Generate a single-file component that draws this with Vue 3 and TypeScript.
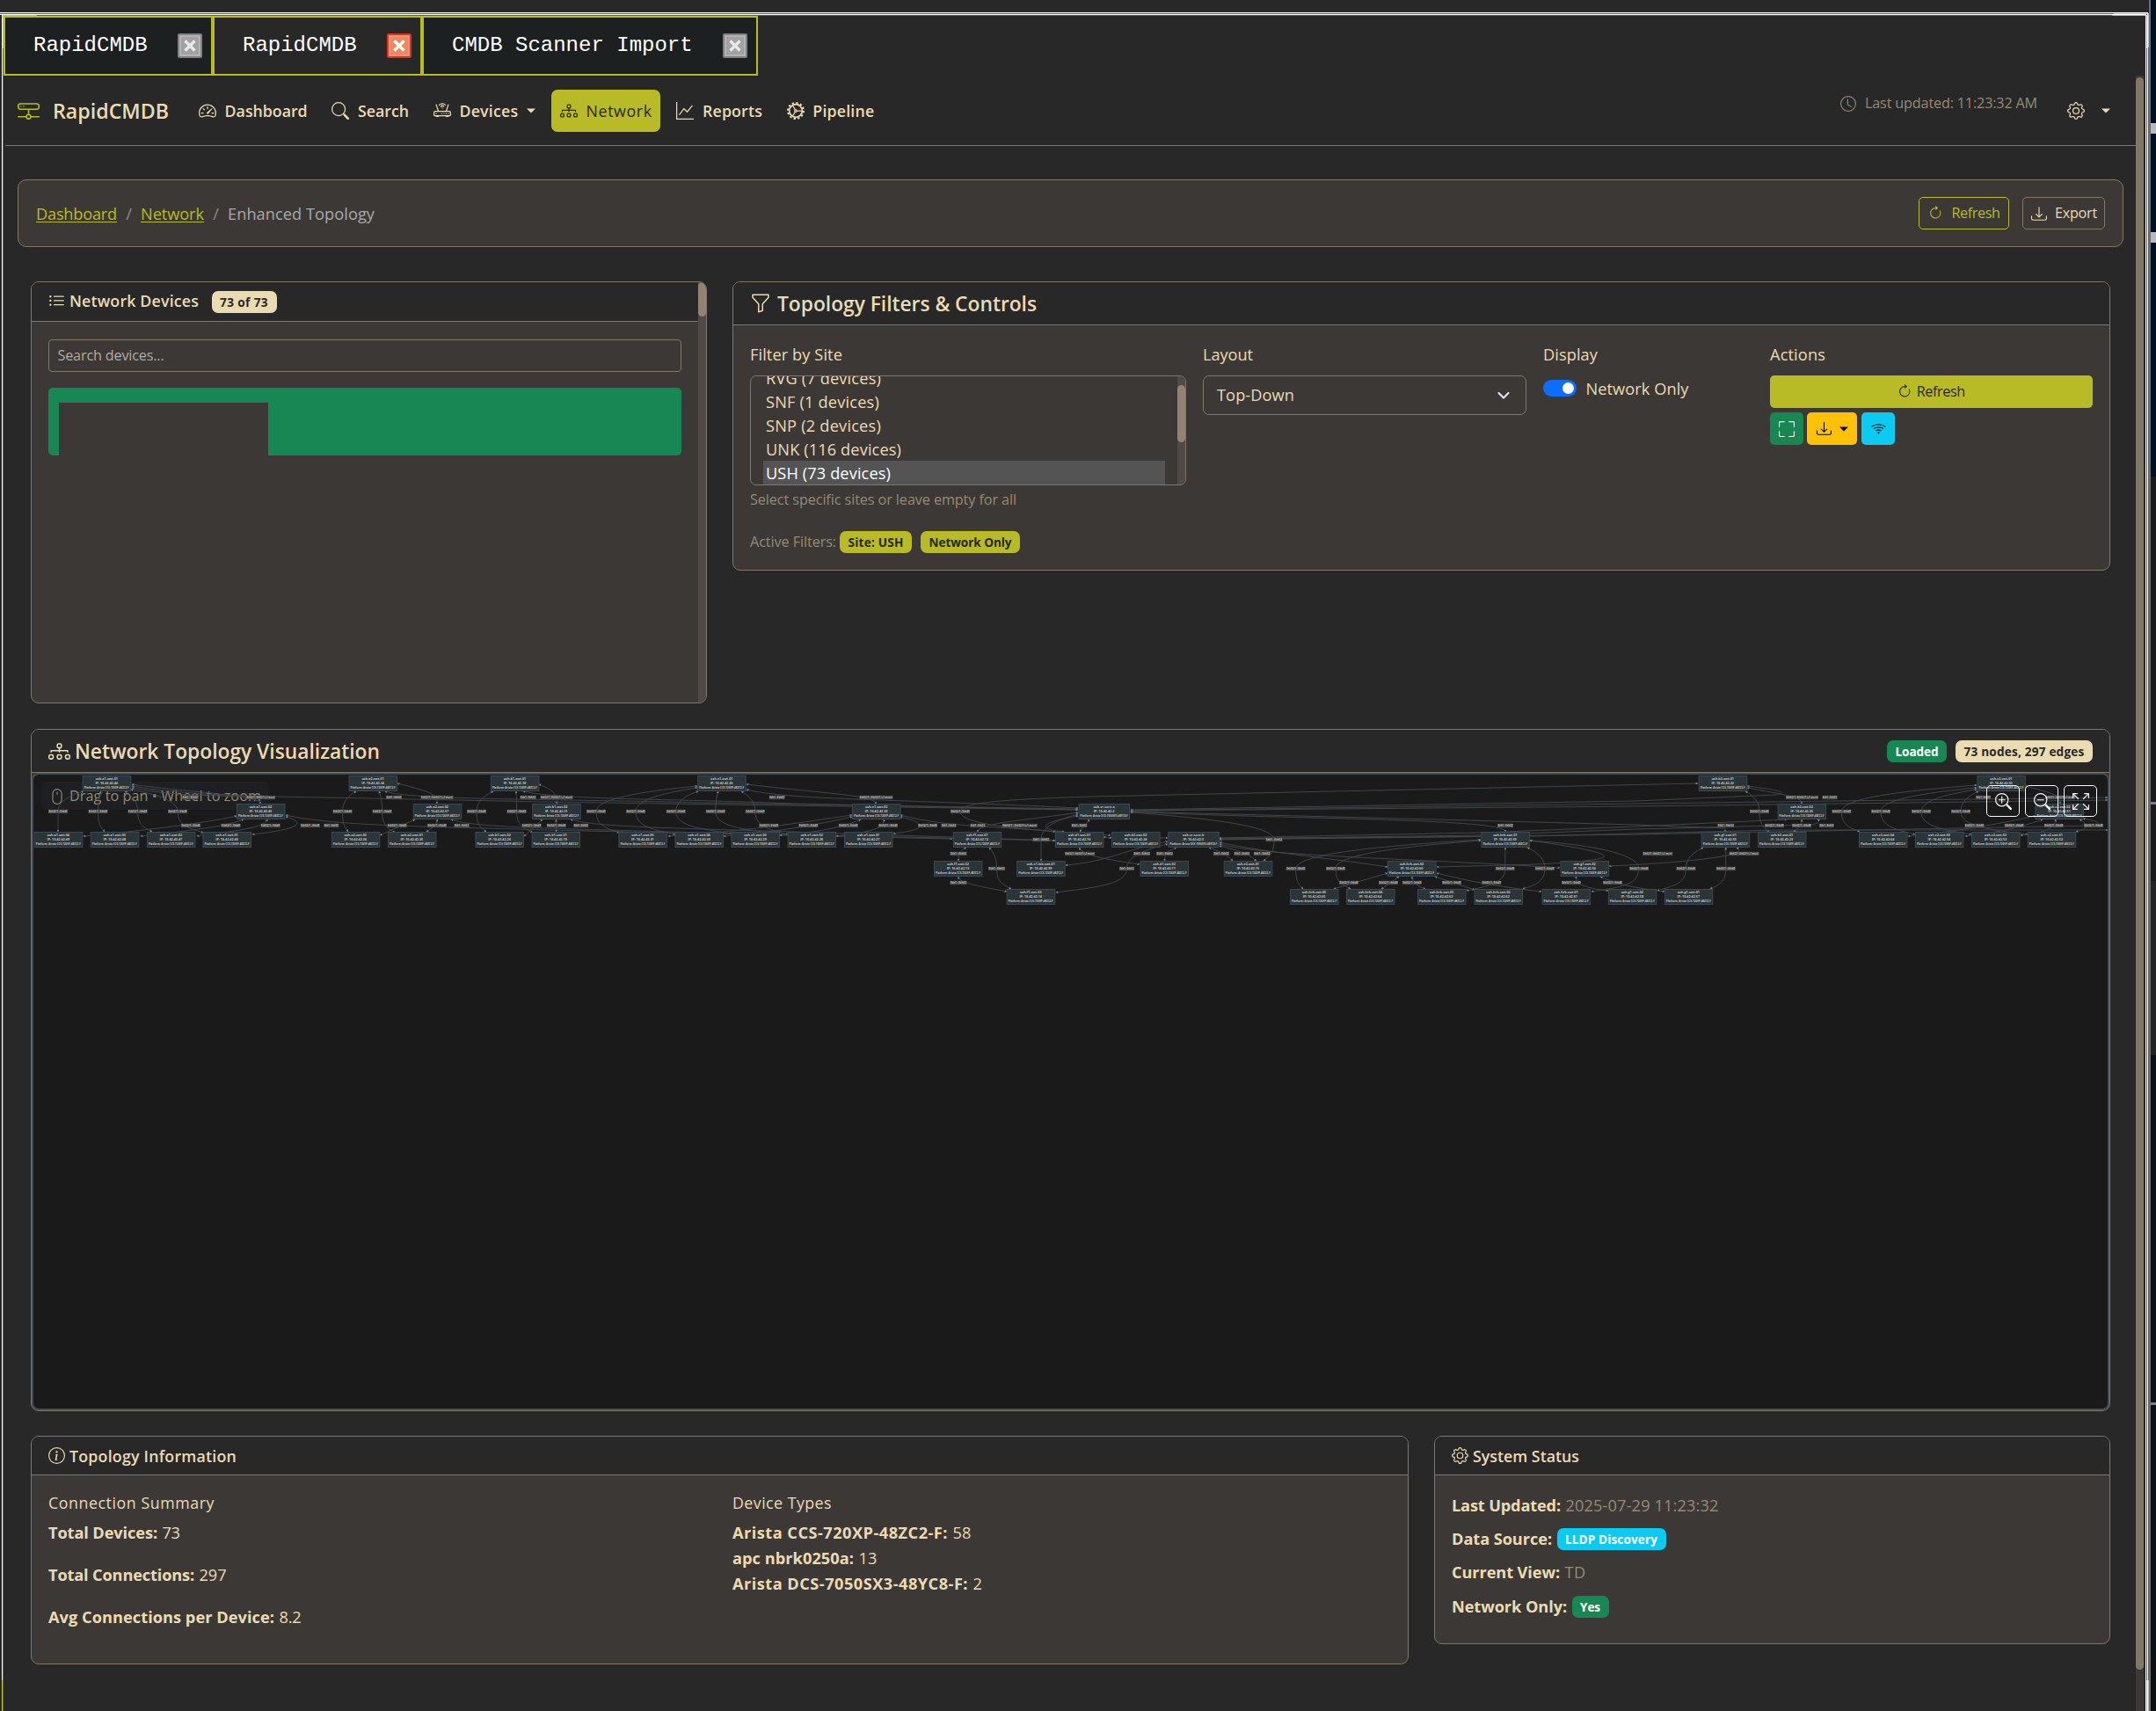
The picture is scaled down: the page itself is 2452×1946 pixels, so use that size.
<script setup lang="ts">
import { h, type Directive, type FunctionalComponent } from 'vue'

const RING = 'M8 15A7 7 0 1 1 8 1a7 7 0 0 1 0 14m0 1A8 8 0 1 0 8 0a8 8 0 0 0 0 16'
const LENS =
  'M6.5 12a5.5 5.5 0 1 0 0-11 5.5 5.5 0 0 0 0 11M13 6.5a6.5 6.5 0 1 1-13 0 6.5 6.5 0 0 1 13 0'
const HANDLE =
  'M10.344 11.742q.044.06.098.115l3.85 3.85a1 1 0 0 0 1.415-1.414l-3.85-3.85a1 1 0 0 0-.115-.1 6.5 6.5 0 0 1-1.398 1.4z'

const paths: Record<string, string[]> = {
  hdd: [
    'M4.5 5a.5.5 0 1 0 0-1 .5.5 0 0 0 0 1M3 4.5a.5.5 0 1 1-1 0 .5.5 0 0 1 1 0',
    'M0 4a2 2 0 0 1 2-2h12a2 2 0 0 1 2 2v1a2 2 0 0 1-2 2H8.5v3a1.5 1.5 0 0 1 1.5 1.5h5.5a.5.5 0 0 1 0 1H10A1.5 1.5 0 0 1 8.5 14h-1A1.5 1.5 0 0 1 6 12.5H.5a.5.5 0 0 1 0-1H6A1.5 1.5 0 0 1 7.5 10V7H2a2 2 0 0 1-2-2zm1 0v1a1 1 0 0 0 1 1h12a1 1 0 0 0 1-1V4a1 1 0 0 0-1-1H2a1 1 0 0 0-1 1m6 7.5v1a.5.5 0 0 0 .5.5h1a.5.5 0 0 0 .5-.5v-1a.5.5 0 0 0-.5-.5h-1a.5.5 0 0 0-.5.5',
  ],
  speed: [
    'M8 4a.5.5 0 0 1 .5.5V6a.5.5 0 0 1-1 0V4.5A.5.5 0 0 1 8 4M3.732 5.732a.5.5 0 0 1 .707 0l.915.914a.5.5 0 1 1-.708.708l-.914-.915a.5.5 0 0 1 0-.707M2 10a.5.5 0 0 1 .5-.5h1.586a.5.5 0 0 1 0 1H2.5A.5.5 0 0 1 2 10m9.5 0a.5.5 0 0 1 .5-.5h1.5a.5.5 0 0 1 0 1H12a.5.5 0 0 1-.5-.5m.754-4.246a.39.39 0 0 0-.527-.02L7.547 9.31a.91.91 0 1 0 1.302 1.258l3.434-4.297a.39.39 0 0 0-.029-.518z',
    'M0 10a8 8 0 1 1 15.547 2.661c-.442 1.253-1.845 1.602-2.932 1.25C11.309 13.488 9.475 13 8 13c-1.474 0-3.31.488-4.615.911-1.087.352-2.49.003-2.932-1.25A8 8 0 0 1 0 10m8-7a7 7 0 0 0-6.603 9.329c.203.575.923.876 1.68.63C4.397 12.533 6.358 12 8 12s3.604.532 4.923.96c.757.245 1.477-.056 1.68-.631A7 7 0 0 0 8 3',
  ],
  search: [LENS, HANDLE],
  router: [
    'M5.525 3.025a3.5 3.5 0 0 1 4.95 0 .5.5 0 1 0 .707-.707 4.5 4.5 0 0 0-6.364 0 .5.5 0 0 0 .707.707',
    'M6.94 4.44a1.5 1.5 0 0 1 2.12 0 .5.5 0 0 0 .708-.708 2.5 2.5 0 0 0-3.536 0 .5.5 0 0 0 .707.707ZM2.5 11a.5.5 0 1 1 0-1 .5.5 0 0 1 0 1m4.5-.5a.5.5 0 1 0 1 0 .5.5 0 0 0-1 0m2.5.5a.5.5 0 1 1 0-1 .5.5 0 0 1 0 1m1.5-.5a.5.5 0 1 0 1 0 .5.5 0 0 0-1 0m2 0a.5.5 0 1 0 1 0 .5.5 0 0 0-1 0',
    'M2.974 2.342a.5.5 0 1 0-.948.316L3.806 8H1.5A1.5 1.5 0 0 0 0 9.5v2A1.5 1.5 0 0 0 1.5 13H2a.5.5 0 0 0 .5.5h2A.5.5 0 0 0 5 13h6a.5.5 0 0 0 .5.5h2a.5.5 0 0 0 .5-.5h.5a1.5 1.5 0 0 0 1.5-1.5v-2A1.5 1.5 0 0 0 14.5 8h-2.306l1.78-5.342a.5.5 0 1 0-.948-.316L11.14 8H4.86zM14.5 9a.5.5 0 0 1 .5.5v2a.5.5 0 0 1-.5.5h-13a.5.5 0 0 1-.5-.5v-2a.5.5 0 0 1 .5-.5z',
    'M8.5 5.5a.5.5 0 1 1-1 0 .5.5 0 0 1 1 0',
  ],
  diagram: [
    'M6 3.5A1.5 1.5 0 0 1 7.5 2h1A1.5 1.5 0 0 1 10 3.5v1A1.5 1.5 0 0 1 8.5 6v1H14a.5.5 0 0 1 .5.5v1a.5.5 0 0 1-1 0V8h-5v.5a.5.5 0 0 1-1 0V8h-5v.5a.5.5 0 0 1-1 0v-1A.5.5 0 0 1 2 7h5.5V6A1.5 1.5 0 0 1 6 4.5zM8.5 5a.5.5 0 0 0 .5-.5v-1a.5.5 0 0 0-.5-.5h-1a.5.5 0 0 0-.5.5v1a.5.5 0 0 0 .5.5zM0 11.5A1.5 1.5 0 0 1 1.5 10h1A1.5 1.5 0 0 1 4 11.5v1A1.5 1.5 0 0 1 2.5 14h-1A1.5 1.5 0 0 1 0 12.5zm1.5-.5a.5.5 0 0 0-.5.5v1a.5.5 0 0 0 .5.5h1a.5.5 0 0 0 .5-.5v-1a.5.5 0 0 0-.5-.5zm4.5.5A1.5 1.5 0 0 1 7.5 10h1a1.5 1.5 0 0 1 1.5 1.5v1A1.5 1.5 0 0 1 8.5 14h-1A1.5 1.5 0 0 1 6 12.5zm1.5-.5a.5.5 0 0 0-.5.5v1a.5.5 0 0 0 .5.5h1a.5.5 0 0 0 .5-.5v-1a.5.5 0 0 0-.5-.5zm4.5.5a1.5 1.5 0 0 1 1.5-1.5h1a1.5 1.5 0 0 1 1.5 1.5v1a1.5 1.5 0 0 1-1.5 1.5h-1a1.5 1.5 0 0 1-1.5-1.5zm1.5-.5a.5.5 0 0 0-.5.5v1a.5.5 0 0 0 .5.5h1a.5.5 0 0 0 .5-.5v-1a.5.5 0 0 0-.5-.5z',
  ],
  graph: [
    'M0 0h1v15h15v1H0zm14.817 3.113a.5.5 0 0 1 .07.704l-4.5 5.5a.5.5 0 0 1-.74.037L7.06 6.767l-3.656 5.027a.5.5 0 0 1-.808-.588l4-5.5a.5.5 0 0 1 .758-.06l2.609 2.61 4.15-5.073a.5.5 0 0 1 .704-.07',
  ],
  clock: [
    'M8 3.5a.5.5 0 0 0-1 0V9a.5.5 0 0 0 .252.434l3.5 2a.5.5 0 0 0 .496-.868L8 8.71z',
    RING,
  ],
  gear: [
    'M8 4.754a3.246 3.246 0 1 0 0 6.492 3.246 3.246 0 0 0 0-6.492M5.754 8a2.246 2.246 0 1 1 4.492 0 2.246 2.246 0 0 1-4.492 0',
    'M9.796 1.343c-.527-1.79-3.065-1.79-3.592 0l-.094.319a.873.873 0 0 1-1.255.52l-.292-.16c-1.64-.892-3.433.902-2.54 2.541l.159.292a.873.873 0 0 1-.52 1.255l-.319.094c-1.79.527-1.79 3.065 0 3.592l.319.094a.873.873 0 0 1 .52 1.255l-.16.292c-.892 1.64.901 3.434 2.541 2.54l.292-.159a.873.873 0 0 1 1.255.52l.094.319c.527 1.79 3.065 1.79 3.592 0l.094-.319a.873.873 0 0 1 1.255-.52l.292.16c1.64.893 3.434-.902 2.54-2.541l-.159-.292a.873.873 0 0 1 .52-1.255l.319-.094c1.79-.527 1.79-3.065 0-3.592l-.319-.094a.873.873 0 0 1-.52-1.255l.16-.292c.893-1.64-.902-3.433-2.541-2.54l-.292.159a.873.873 0 0 1-1.255-.52zm-2.633.283c.246-.835 1.428-.835 1.674 0l.094.319a1.873 1.873 0 0 0 2.693 1.115l.291-.16c.764-.415 1.6.42 1.184 1.185l-.159.292a1.873 1.873 0 0 0 1.116 2.692l.318.094c.835.246.835 1.428 0 1.674l-.319.094a1.873 1.873 0 0 0-1.115 2.693l.16.291c.415.764-.42 1.6-1.185 1.184l-.291-.159a1.873 1.873 0 0 0-2.693 1.116l-.094.318c-.246.835-1.428.835-1.674 0l-.094-.319a1.873 1.873 0 0 0-2.692-1.115l-.292.16c-.764.415-1.6-.42-1.184-1.185l.159-.291A1.873 1.873 0 0 0 1.945 8.93l-.319-.094c-.835-.246-.835-1.428 0-1.674l.319-.094A1.873 1.873 0 0 0 3.06 4.377l-.16-.292c-.415-.764.42-1.6 1.185-1.184l.292.159a1.873 1.873 0 0 0 2.692-1.115z',
  ],
  refresh: [
    'M8 3a5 5 0 1 0 4.546 2.914.5.5 0 0 1 .908-.417A6 6 0 1 1 8 2z',
    'M8 4.466V.534a.25.25 0 0 1 .41-.192l2.36 1.966c.12.1.12.284 0 .384L8.41 4.658A.25.25 0 0 1 8 4.466',
  ],
  download: [
    'M.5 9.9a.5.5 0 0 1 .5.5v2.5a1 1 0 0 0 1 1h12a1 1 0 0 0 1-1v-2.5a.5.5 0 0 1 1 0v2.5a2 2 0 0 1-2 2H2a2 2 0 0 1-2-2v-2.5a.5.5 0 0 1 .5-.5',
    'M7.646 11.854a.5.5 0 0 0 .708 0l3-3a.5.5 0 0 0-.708-.708L8.5 10.293V1.5a.5.5 0 0 0-1 0v8.793L5.354 8.146a.5.5 0 1 0-.708.708z',
  ],
  list: [
    'M5 11.5a.5.5 0 0 1 .5-.5h9a.5.5 0 0 1 0 1h-9a.5.5 0 0 1-.5-.5m0-4a.5.5 0 0 1 .5-.5h9a.5.5 0 0 1 0 1h-9a.5.5 0 0 1-.5-.5m0-4a.5.5 0 0 1 .5-.5h9a.5.5 0 0 1 0 1h-9a.5.5 0 0 1-.5-.5m-3 1a1 1 0 1 0 0-2 1 1 0 0 0 0 2m0 4a1 1 0 1 0 0-2 1 1 0 0 0 0 2m0 4a1 1 0 1 0 0-2 1 1 0 0 0 0 2',
  ],
  funnel: [
    'M1.5 1.5A.5.5 0 0 1 2 1h12a.5.5 0 0 1 .5.5v2a.5.5 0 0 1-.128.334L10 8.692V13.5a.5.5 0 0 1-.342.474l-3 1A.5.5 0 0 1 6 14.5V8.692L1.628 3.834A.5.5 0 0 1 1.5 3.5zm1 .5v1.308l4.372 4.858A.5.5 0 0 1 7 8.5v5.306l2-.666V8.5a.5.5 0 0 1 .128-.334L13.5 3.308V2z',
  ],
  fullscreen: [
    'M1.5 1a.5.5 0 0 0-.5.5v4a.5.5 0 0 1-1 0v-4A1.5 1.5 0 0 1 1.5 0h4a.5.5 0 0 1 0 1zM10 .5a.5.5 0 0 1 .5-.5h4A1.5 1.5 0 0 1 16 1.5v4a.5.5 0 0 1-1 0v-4a.5.5 0 0 0-.5-.5h-4a.5.5 0 0 1-.5-.5M.5 10a.5.5 0 0 1 .5.5v4a.5.5 0 0 0 .5.5h4a.5.5 0 0 1 0 1h-4A1.5 1.5 0 0 1 0 14.5v-4a.5.5 0 0 1 .5-.5m15 0a.5.5 0 0 1 .5.5v4a1.5 1.5 0 0 1-1.5 1.5h-4a.5.5 0 0 1 0-1h4a.5.5 0 0 0 .5-.5v-4a.5.5 0 0 1 .5-.5',
  ],
  wifi: [
    'M15.384 6.115a.485.485 0 0 0-.047-.736A12.44 12.44 0 0 0 8 3C5.259 3 2.723 3.882.663 5.379a.485.485 0 0 0-.048.736.52.52 0 0 0 .668.05A11.45 11.45 0 0 1 8 4c2.507 0 4.827.802 6.716 2.164.205.148.49.13.668-.049',
    'M13.229 8.271a.482.482 0 0 0-.063-.745A9.46 9.46 0 0 0 8 6c-1.905 0-3.68.56-5.166 1.526a.48.48 0 0 0-.063.745.525.525 0 0 0 .652.065A8.46 8.46 0 0 1 8 7a8.46 8.46 0 0 1 4.576 1.336c.206.132.48.108.653-.065m-2.183 2.183c.226-.226.185-.605-.1-.75A6.5 6.5 0 0 0 8 9c-1.06 0-2.062.254-2.946.704-.285.145-.326.524-.1.75l.015.015c.16.16.407.19.611.09A5.5 5.5 0 0 1 8 10c.868 0 1.69.201 2.42.56.203.1.45.07.61-.091zM9.06 12.44c.196-.196.198-.52-.04-.66A2 2 0 0 0 8 11.5a2 2 0 0 0-1.02.28c-.238.14-.236.464-.04.66l.706.706a.5.5 0 0 0 .707 0l.707-.707z',
  ],
  mouse: [
    'M8 3a.5.5 0 0 1 .5.5v2a.5.5 0 0 1-1 0v-2A.5.5 0 0 1 8 3m4 8a4 4 0 0 1-8 0V5a4 4 0 1 1 8 0zM8 0a5 5 0 0 0-5 5v6a5 5 0 0 0 10 0V5a5 5 0 0 0-5-5',
  ],
  zoomIn: [
    LENS,
    HANDLE,
    'M6.5 3a.5.5 0 0 1 .5.5V6h2.5a.5.5 0 0 1 0 1H7v2.5a.5.5 0 0 1-1 0V7H3.5a.5.5 0 0 1 0-1H6V3.5a.5.5 0 0 1 .5-.5',
  ],
  zoomOut: [LENS, HANDLE, 'M3 6.5a.5.5 0 0 1 .5-.5h6a.5.5 0 0 1 0 1h-6a.5.5 0 0 1-.5-.5'],
  arrows: [
    'M5.828 10.172a.5.5 0 0 0-.707 0l-4.096 4.096V11.5a.5.5 0 0 0-1 0v3.975a.5.5 0 0 0 .5.5H4.5a.5.5 0 0 0 0-1H1.732l4.096-4.096a.5.5 0 0 0 0-.707m4.344 0a.5.5 0 0 1 .707 0l4.096 4.096V11.5a.5.5 0 1 1 1 0v3.975a.5.5 0 0 1-.5.5H11.5a.5.5 0 0 1 0-1h2.768l-4.096-4.096a.5.5 0 0 1 0-.707m0-4.344a.5.5 0 0 0 .707 0l4.096-4.096V4.5a.5.5 0 1 0 1 0V.525a.5.5 0 0 0-.5-.5H11.5a.5.5 0 0 0 0 1h2.768l-4.096 4.096a.5.5 0 0 0 0 .707m-4.344 0a.5.5 0 0 1-.707 0L1.025 1.732V4.5a.5.5 0 0 1-1 0V.525a.5.5 0 0 1 .5-.5H4.5a.5.5 0 0 1 0 1H1.732l4.096 4.096a.5.5 0 0 1 0 .707',
  ],
  info: [
    RING,
    'm8.93 6.588-2.29.287-.082.38.45.083c.294.07.352.176.288.469l-.738 3.468c-.194.897.105 1.319.808 1.319.545 0 1.178-.252 1.465-.598l.088-.416c-.2.176-.492.246-.686.246-.275 0-.375-.193-.304-.533zM9 4.5a1 1 0 1 1-2 0 1 1 0 0 1 2 0',
  ],
  caret: ['M0 4h16l-8 8z'],
}

const Ico: FunctionalComponent<{ name: string; size?: number }> = (p) => {
  const size = p.size ?? 19
  // Toothed wheel with spokes is simpler as strokes than as an outline.
  const body =
    p.name === 'wheel'
      ? [
          h('circle', { cx: 8, cy: 8, r: 5.9, fill: 'none', stroke: 'currentColor', 'stroke-width': 1.4 }),
          h('circle', {
            cx: 8, cy: 8, r: 7.2, fill: 'none', stroke: 'currentColor',
            'stroke-width': 1.6, 'stroke-dasharray': '1.9 1.87',
          }),
          h('path', {
            d: 'M9 8h5M7.5 7.1 5 2.8M7.5 8.9 5 13.2M9 8a1 1 0 1 1-2 0 1 1 0 0 1 2 0',
            fill: 'none', stroke: 'currentColor', 'stroke-width': 1,
          }),
        ]
      : (paths[p.name] ?? []).map((d) => h('path', { d, 'fill-rule': 'evenodd' }))
  return h('svg', { width: size, height: size, viewBox: '0 0 16 16', fill: 'currentColor' }, body)
}
Ico.props = ['name', 'size']

// Tracks the text so that it fills the given width in pixels.
const vFit: Directive<HTMLElement, number> = {
  mounted(el, { value }) {
    const count = (el.textContent ?? '').length
    const natural = el.getBoundingClientRect().width
    if (count > 0) el.style.letterSpacing = `${((value - natural) / count).toFixed(3)}px`
  },
}

const tabs = [
  { title: 'RapidCMDB', active: false },
  { title: 'RapidCMDB', active: true },
  { title: 'CMDB Scanner Import', active: false },
]

const nav = [
  { label: 'Dashboard', icon: 'speed', w: 94 },
  { label: 'Search', icon: 'search', w: 58 },
  { label: 'Devices', icon: 'router', w: 67, caret: true },
  { label: 'Network', icon: 'diagram', w: 75, active: true },
  { label: 'Reports', icon: 'graph', w: 68 },
  { label: 'Pipeline', icon: 'wheel', w: 70 },
]

const sites = [
  { label: 'RVG (7 devices)', w: 131 },
  { label: 'SNF (1 devices)', w: 129 },
  { label: 'SNP (2 devices)', w: 131 },
  { label: 'UNK (116 devices)', w: 154 },
  { label: 'USH (73 devices)', w: 142, selected: true },
]

const summary = [
  { label: 'Total Devices:', lw: 124, value: '73', vw: 20 },
  { label: 'Total Connections:', lw: 166, value: '297', vw: 31 },
  { label: 'Avg Connections per Device:', lw: 257, value: '8.2', vw: 25 },
]
const types = [
  { label: 'Arista CCS-720XP-48ZC2-F:', lw: 245, value: '58', vw: 21 },
  { label: 'apc nbrk0250a:', lw: 138, value: '13', vw: 21 },
  { label: 'Arista DCS-7050SX3-48YC8-F:', lw: 268, value: '2', vw: 10 },
]

// Topology nodes: [left, layer, host, address, wide]
const layerY = [882, 914, 946, 979, 1011]
type GraphNode = [number, number, string, string, boolean?]
const nodes: GraphNode[] = [
  [93.7, 0, 'ush-a1-swt-01', '10.42.42.44'],
  [396.6, 0, 'ush-a2-swt-01', '10.42.42.34'],
  [557.9, 0, 'ush-b1-swt-01', '10.42.42.18'],
  [793.2, 0, 'ush-e1-swt-01', '10.42.42.26'],
  [1931.7, 0, 'ush-b2-swt-01', '10.42.42.22'],
  [2248.4, 0, 'ush-c2-swt-01', '10.42.42.50'],
  [268.9, 1, 'ush-a1-swt-02', '10.42.42.45'],
  [469.8, 1, 'ush-a2-swt-02', '10.42.42.37'],
  [605.2, 1, 'ush-b1-swt-02', '10.42.42.21'],
  [969.1, 1, 'ush-e1-swt-02', '10.42.42.33'],
  [1226.6, 1, 'ush-cr-core-a', '10.42.42.2', true],
  [2021.6, 1, 'ush-b2-swt-02', '10.42.42.25'],
  [2314.5, 1, 'ush-c2-swt-02', '10.42.42.51'],
  [38.8, 2, 'ush-a1-swt-04', '10.42.42.49'],
  [102.8, 2, 'ush-a1-swt-03', '10.42.42.48'],
  [166.9, 2, 'ush-a1-swt-02', '10.42.42.47'],
  [230.5, 2, 'ush-a1-swt-01', '10.42.42.46'],
  [376.8, 2, 'ush-a2-swt-02', '10.42.42.36'],
  [440.9, 2, 'ush-a2-swt-01', '10.42.42.35'],
  [540.5, 2, 'ush-b1-swt-02', '10.42.42.20'],
  [604.6, 2, 'ush-b1-swt-01', '10.42.42.19'],
  [703.4, 2, 'ush-e1-swt-05', '10.42.42.31'],
  [767.5, 2, 'ush-e1-swt-04', '10.42.42.30'],
  [831.5, 2, 'ush-e1-swt-03', '10.42.42.29'],
  [895.6, 2, 'ush-e1-swt-02', '10.42.42.28'],
  [960, 2, 'ush-e1-swt-01', '10.42.42.27'],
  [1083.8, 2, 'ush-f1-swt-01', '10.42.42.12'],
  [1200, 2, 'ush-d1-swt-01', '10.42.42.10'],
  [1264.1, 2, 'ush-b2-swt-02', '10.42.42.24'],
  [1328.2, 2, 'ush-cr-core-b', '10.42.42.3', true],
  [1684.4, 2, 'ush-hrb-swt-01', '10.42.42.59'],
  [1934.7, 2, 'ush-g1-swt-01', '10.42.42.55'],
  [1998.9, 2, 'ush-b2-swt-01', '10.42.42.23'],
  [2114, 2, 'ush-c2-swt-04', '10.42.42.64'],
  [2177.9, 2, 'ush-c2-swt-03', '10.42.42.54'],
  [2242, 2, 'ush-c2-swt-02', '10.42.42.53'],
  [2305.8, 2, 'ush-c2-swt-01', '10.42.42.52'],
  [1062, 3, 'ush-f1-swt-02', '10.42.42.13'],
  [1156.2, 3, 'ush-e1-lab-swt-01', '10.42.42.99'],
  [1296.5, 3, 'ush-d1-swt-02', '10.42.42.11'],
  [1391.8, 3, 'ush-e2-swt-01', '10.42.42.15'],
  [1578, 3, 'ush-hrb-swt-02', '10.42.42.60'],
  [1774.6, 3, 'ush-g1-swt-02', '10.42.42.56'],
  [1144.7, 4, 'ush-f1-swt-03', '10.42.42.14'],
  [1467, 4, 'ush-hrb-swt-05', '10.42.42.65'],
  [1531, 4, 'ush-hrb-swt-04', '10.42.42.64'],
  [1612, 4, 'ush-hrb-swt-03', '10.42.42.63'],
  [1676.5, 4, 'ush-hrb-swt-02', '10.42.42.62'],
  [1753.6, 4, 'ush-hrb-swt-01', '10.42.42.61'],
  [1828.8, 4, 'ush-g1-swt-02', '10.42.42.58'],
  [1892.8, 4, 'ush-g1-swt-01', '10.42.42.57'],
]

// Port labels by line: [y, [centre, width?]...]
const labelRows: [number, number[][]][] = [
  [907, [[216.3, 18], [296.5, 33], [448, 18], [497, 37], [600.6, 18], [633, 37], [883.7, 18], [996.4, 38], [2049.5, 37], [2081, 17], [2255.6, 17], [2343, 34]]],
  [923, [[66], [111.5], [156.6], [202], [389.5], [434.6], [542], [587.6], [678], [723], [768.7], [813.8], [858.8], [1092], [2001], [2094.4], [2139], [2185], [2230]]],
  [939, [[217], [262.6], [307.6], [352.7], [376.8, 17], [451.6], [497], [525, 17], [604.6], [632.7], [660.7, 17], [874.3], [919.3], [964.8], [1009.9], [1055], [1079, 17], [1112, 17], [1159.7, 40], [1227.4, 18], [1712, 18], [1962.7, 19], [2018], [2049], [2077.4, 17], [2245.4], [2290.7], [2335.7], [2381]]],
  [955, [[1184, 19], [1449, 19]]],
  [971, [[1090, 19], [1228, 34], [1298.5, 19], [1324.6, 19], [1389, 18], [1412.4, 18], [1435.3, 19], [1885.3, 34], [1983.4, 34]]],
  [988, [[1133.6, 19], [1281.5, 17], [1473.7], [1519], [1711.7], [1756.8], [1864], [1917.4], [1962.7]]],
  [1004, [[1090, 19], [1534], [1579], [1605.8], [1651], [1696.3], [1787], [1834]]],
]
const portText = (w: number) =>
  w > 30 ? 'Eth52/1 : Eth52/1 (+1 more)' : w < 20 ? 'Eth1 : Eth52' : 'Eth52/1 : Eth49'
const labels = labelRows.flatMap(([y, row]) =>
  row.map(([x, w = 22]) => ({ x, y, w, text: portText(w) })),
)

// Links that bend through their port label: start, label, end.
const via = [
  [95, 900, 66, 923, 66, 946], [115, 900, 111.5, 923, 119, 946], [142, 900, 156.6, 923, 173, 946], [149, 898, 202, 923, 231, 947],
  [405, 900, 389.5, 923, 396, 946], [431, 900, 434.6, 923, 449, 947], [561, 900, 542, 923, 553, 946], [587, 900, 587.6, 923, 606, 947],
  [793, 894, 678, 923, 704, 947], [793, 896, 723, 923, 768, 949], [794, 900, 768.7, 923, 832, 948], [817, 900, 813.8, 923, 880, 948], [843, 900, 858.8, 923, 896, 949],
  [1985, 900, 2001, 923, 2012, 946],
  [2248, 893, 2094.4, 923, 2115, 946], [2248, 896, 2139, 923, 2178, 949], [2248, 898, 2185, 923, 2242, 949], [2250, 900, 2230, 923, 2306, 949],
  [1684, 955, 1473.7, 988, 1482, 1011], [1684, 956, 1519, 988, 1536, 1011], [1712, 964, 1711.7, 988, 1668, 1013], [1737, 964, 1756.8, 988, 1732, 1011],
  [1937, 964, 1917.4, 988, 1885, 1013], [1962.7, 964, 1962.7, 988, 1945, 1011], [1125, 964, 1133.6, 988, 1150, 1011],
  [1328, 960, 1281.5, 988, 1201, 1015], [1931, 891, 1092, 923, 1263, 950],
  [1226, 926, 1184, 955, 1184, 979], [1286, 924, 1449, 955, 1437, 979],
]
const bend = ([a, b, c, d, e, f]: number[]) =>
  c === 1092
    ? `M${a} ${b}L1240 906C1150 909 1092 912 ${c} ${d}C1092 940 1180 944 ${e} ${f}`
    : `M${a} ${b}C${a + (c - a) * 0.65} ${b + (d - b) * 0.25} ${c} ${b + (d - b) * 0.55} ${c} ${d}` +
      `C${c} ${d + (f - d) * 0.7} ${c + (e - c) * 0.5} ${d + (f - d) * 0.8} ${e} ${f}`

const free = [
  'M150 892C220 902 296 904 296 914', 'M150 894C220 907 340 906 420 908L620 912L1226 921', 'M150 896C200 906 240 904 296 907',
  'M269 928C230 937 150 946 95 951', 'M277 932C250 942 200 946 160 951', 'M304 932C300 944 250 946 224 951', 'M325 929C350 936 340 943 287 949',
  'M325 927C380 940 500 940 620 944L1083 954', 'M452 891C497 902 497 905 497 914', 'M438 900C470 910 600 908 800 913L1226 920',
  'M472 932L432 950', 'M497 932C497 940 490 942 485 946', 'M513 932C540 942 640 942 760 946L1200 956', 'M613 892C633 900 633 905 633 914',
  'M595 900C640 910 760 908 900 914L1226 921', 'M617 932L596 951', 'M632.5 932V946', 'M649 932C680 942 800 942 960 948L1200 956',
  'M849 892C930 902 996 904 996 914', 'M849 898C900 910 1000 908 1226 919', 'M969 927C900 937 860 944 760 951', 'M969 929C910 942 880 946 823 951',
  'M979 932C950 944 920 947 887 950', 'M1005 932C1008 944 980 947 951 951', 'M1024 929C1060 938 1050 944 1016 948',
  'M1024 927C1080 942 1150 940 1200 946', 'M1226 924C1160 934 1112 936 1112 946', 'M1226 928C1180 936 1180 943 1210 946', 'M1239 932L1228 946',
  'M1286 921L1860 911L2020 904C2035 901 2020 898 1987 894', 'M1286 922L1860 914L2397 907', 'M1286 922L1860 917L2397 910', 'M1286 923C1450 932 1712 930 1712 946',
  'M1286 923L1860 938L1962 942V946', 'M1314 953L1328 953', 'M1255 952L1264 953', 'M1387 953L1684 947L1860 940L2032 932', 'M1387 954L1684 950L1860 943L2060 938C2070 936 2070 934 2067 932',
  'M1387 954L1740 951L2020 944L2397 944', 'M1387 955L1860 949L2380 939C2395 936 2380 933 2369 931', 'M1387 958C1440 970 1500 974 1578 986', 'M1387 960C1440 974 1600 976 1774 987',
  'M1375 964C1388 968 1395 972 1402 979', 'M1338 964C1326 968 1324.5 972 1324.5 979', 'M1328 957C1280 966 1260 980 1212 984', 'M1228 964C1228 972 1260 978 1296 983',
  'M1099 964C1090 968 1090 972 1090 979', 'M1090 997C1090 1005 1120 1009 1145 1014', 'M1740 956C1800 964 1850 974 1810 978C1770 984 1700 984 1634 986',
  'M1740 956C1830 962 1864 975 1864 988C1862 1006 1850 1008 1810 1014', 'M1578 993L1517 1011', 'M1591 997L1571 1011', 'M1606 997C1606 1004 1612 1008 1621 1011', 'M1632 997L1677 1012',
  'M1634 993C1670 1002 1700 1008 1753 1014', 'M1830 985C1900 982 1960 976 1975 970C1979 968 1978 966 1975 964', 'M1793 997C1790 1004 1800 1010 1829 1013', 'M1820 997C1840 1006 1860 1010 1893 1014',
  'M1987 896C2030 904 2049 906 2049 914', 'M2049 932C2049 940 2044 942 2040 946', 'M2303 894C2343 904 2343 906 2343 914', 'M2315 928C2270 938 2220 946 2170 951',
  'M2323 932C2290 944 2260 948 2235 951', 'M2338 932C2336 944 2320 948 2298 950', 'M2365 932C2380 940 2370 944 2361 946', 'M1387 962C1420 970 1420 973 1429 979',
]
const links = [...via.map(bend), ...free]
</script>

<template>
  <div class="screen">
    <div class="window">
      <div class="tabs">
        <div v-for="(t, i) in tabs" :key="i" class="tab" :class="{ on: t.active }">
          <span>{{ t.title }}</span>
          <span class="close">
            <svg width="14" height="14" viewBox="0 0 14 14" fill="none" stroke="currentColor" stroke-width="3.4">
              <path d="M1.5 1.5l11 11M12.5 1.5l-11 11" />
            </svg>
          </span>
        </div>
      </div>

      <div class="viewport">
        <main class="page">
          <nav class="navbar">
            <div class="brand"><Ico name="hdd" :size="25" /><span v-fit="132">RapidCMDB</span></div>
            <div class="links">
              <a v-for="n in nav" :key="n.label" class="link" :class="{ active: n.active }">
                <Ico :name="n.icon" :size="20" /><span v-fit="n.w">{{ n.label }}</span>
                <Ico v-if="n.caret" name="caret" :size="10" />
              </a>
            </div>
            <div class="updated"><Ico name="clock" :size="18" /><span v-fit="196">Last updated: 11:23:32 AM</span></div>
            <div class="settings"><Ico name="gear" :size="20" /><Ico name="caret" :size="10" /></div>
          </nav>

          <div class="crumbs">
            <a><span v-fit="92">Dashboard</span></a><i>/</i><a><span v-fit="72">Network</span></a><i>/</i>
            <span v-fit="167" class="here">Enhanced Topology</span>
            <button class="btn accent"><Ico name="refresh" :size="16.5" /><span v-fit="55">Refresh</span></button>
            <button class="btn plain"><Ico name="download" :size="18" /><span v-fit="48">Export</span></button>
          </div>

          <div class="row top">
            <section class="card devices">
              <div class="col">
                <header class="head">
                  <Ico name="list" :size="19" /><span v-fit="147" class="h6">Network Devices</span>
                  <span class="badge cream"><span v-fit="55">73 of 73</span></span>
                </header>
                <div class="dbody">
                  <div class="search"><span v-fit="121">Search devices...</span></div>
                  <div class="device"><div class="mask"></div></div>
                </div>
              </div>
              <div class="bar"><div class="thumb"></div></div>
            </section>

            <section class="card filters">
              <header class="head big"><Ico name="funnel" :size="24" /><span v-fit="295" class="h5">Topology Filters &amp; Controls</span></header>
              <div class="grid">
                <div>
                  <label><span v-fit="105">Filter by Site</span></label>
                  <div class="sites">
                    <ul>
                      <li v-for="s in sites" :key="s.label" :class="{ sel: s.selected }"><span v-fit="s.w">{{ s.label }}</span></li>
                    </ul>
                    <div class="bar short"><div class="thumb"></div></div>
                  </div>
                  <p class="help"><span v-fit="303">Select specific sites or leave empty for all</span></p>
                </div>
                <div>
                  <label><span v-fit="57">Layout</span></label>
                  <div class="select">
                    <span v-fit="88">Top-Down</span>
                    <svg width="14" height="10" viewBox="0 0 14 10" fill="none" stroke="#dee2e6" stroke-width="2.2" stroke-linecap="round" stroke-linejoin="round">
                      <path d="M1.5 2l5.500 5.500L12.500 2" />
                    </svg>
                  </div>
                </div>
                <div>
                  <label><span v-fit="62">Display</span></label>
                  <div class="switch"><span class="track"><span class="knob"></span></span><span v-fit="117">Network Only</span></div>
                </div>
                <div>
                  <label><span v-fit="63">Actions</span></label>
                  <button class="refresh"><Ico name="refresh" :size="16.5" /><span v-fit="55">Refresh</span></button>
                  <div class="acts">
                    <button class="green"><Ico name="fullscreen" :size="18" /></button>
                    <button class="yellow"><Ico name="download" :size="17" /><Ico name="caret" :size="10" /></button>
                    <button class="cyan"><Ico name="wifi" :size="17" /></button>
                  </div>
                </div>
              </div>
              <div class="active-filters">
                <span v-fit="98" class="mut">Active Filters:</span>
                <span class="badge lime"><span v-fit="63">Site: USH</span></span>
                <span class="badge lime"><span v-fit="94">Network Only</span></span>
              </div>
            </section>
          </div>

          <section class="card viz">
            <header class="head big">
              <Ico name="diagram" :size="25" /><span v-fit="347" class="h5">Network Topology Visualization</span>
              <span class="badge green first"><span v-fit="49">Loaded</span></span>
              <span class="badge cream second"><span v-fit="137">73 nodes, 297 edges</span></span>
            </header>
            <div class="canvas">
              <div class="hint"><Ico name="mouse" :size="18" /><span v-fit="218">Drag to pan • Wheel to zoom</span></div>
              <svg class="graph" width="2359" height="721" viewBox="38 881 2359 721">
                <defs>
                  <marker id="tip" viewBox="0 0 6 6" refX="5" refY="3" markerWidth="3" markerHeight="3" markerUnits="userSpaceOnUse" orient="auto-start-reverse">
                    <path d="M0 0L6 3L0 6z" fill="#71808c" />
                  </marker>
                </defs>
                <path v-for="(d, i) in links" :key="'e' + i" :d="d" class="wire" marker-start="url(#tip)" marker-end="url(#tip)" />
                <g v-for="(l, i) in labels" :key="'l' + i">
                  <rect :x="l.x - l.w / 2" :y="l.y - 2.2" :width="l.w" height="4.4" class="lbg" />
                  <text :x="l.x - l.w / 2 + 0.5" :y="l.y + 1.3" :textLength="l.w - 1" lengthAdjust="spacingAndGlyphs" class="ltx">{{ l.text }}</text>
                </g>
                <g v-for="(n, i) in nodes" :key="'n' + i" :transform="`translate(${n[0]} ${layerY[n[1]]})`">
                  <rect x=".5" y=".5" :width="n[4] ? 57.5 : 54.5" height="17" class="box" />
                  <text :x="n[4] ? 29 : 27.5" y="5.3" text-anchor="middle" class="ntx">{{ n[2] }}</text>
                  <text :x="n[4] ? 29 : 27.5" y="10.2" text-anchor="middle" class="ntx">IP: {{ n[3] }}</text>
                  <text x="2" y="15.1" :textLength="n[4] ? 54 : 51" lengthAdjust="spacingAndGlyphs" class="ntx">Platform: Arista {{ n[4] ? 'DCS-7050SX3-48YC8-F' : 'CCS-720XP-48ZC2-F' }}</text>
                </g>
              </svg>
              <div class="zoom">
                <button><Ico name="zoomIn" :size="19" /></button>
                <button><Ico name="zoomOut" :size="19" /></button>
                <button><Ico name="arrows" :size="19" /></button>
              </div>
            </div>
          </section>

          <div class="row bottom">
            <section class="card info">
              <header class="head"><Ico name="info" :size="19" /><span v-fit="190" class="h6">Topology Information</span></header>
              <div class="cols">
                <div>
                  <div class="sub"><span v-fit="189">Connection Summary</span></div>
                  <div v-for="s in summary" :key="s.label" class="pair loose"><b v-fit="s.lw">{{ s.label }}</b><span v-fit="s.vw">{{ s.value }}</span></div>
                </div>
                <div>
                  <div class="sub"><span v-fit="113">Device Types</span></div>
                  <div v-for="s in types" :key="s.label" class="pair"><b v-fit="s.lw">{{ s.label }}</b><span v-fit="s.vw">{{ s.value }}</span></div>
                </div>
              </div>
            </section>
            <section class="card status">
              <header class="head"><Ico name="gear" :size="19" /><span v-fit="121" class="h6">System Status</span></header>
              <div class="stat">
                <div class="pair"><b v-fit="124">Last Updated:</b><span v-fit="174" class="mut">2025-07-29 11:23:32</span></div>
                <div class="pair"><b v-fit="114">Data Source:</b><span class="badge cyan"><span v-fit="105">LLDP Discovery</span></span></div>
                <div class="pair"><b v-fit="123">Current View:</b><span v-fit="24" class="mut">TD</span></div>
                <div class="pair"><b v-fit="131">Network Only:</b><span class="badge green"><span v-fit="23">Yes</span></span></div>
              </div>
            </section>
          </div>
        </main>
        <div class="bar main-bar"><div class="thumb"></div></div>
      </div>

      <svg class="frame" width="2446" height="1946" viewBox="0 0 2446 1946" shape-rendering="crispEdges">
        <path d="M0 14h2443v1H0zM0 16h2441v1H0zM2 16h1v1895H2zM2440 16h1v1930h-1zM2442 14h1v1932h-1z" fill="#fff" />
        <path d="M0 15h2442v1H0zM4 17h2436v1H4zM3 17h1v1929H3zM2441 17h1v1929h-1zM2443 15h1v1931h-1z" fill="#5d6a2c" />
        <path d="M4 17h38v1H4zM3 17h1v38H3zM2404 15h38v1h-38zM2402 17h38v1h-38zM2443 15h1v39h-1zM2441 17h1v38h-1zM2 1911h1v35H2zM2443 1911h1v35h-1zM2441 1911h1v35h-1z" fill="#c3c843" />
        <path d="M2444 0h2v1946h-2z" fill="#6d6d6d" />
      </svg>
    </div>
    <div class="behind"><i class="s1"></i><i class="s2"></i><i class="s3"></i><i class="s4"></i></div>
  </div>
</template>

<style>
body {
  background: #282828;
  overflow: hidden;
}
</style>

<style scoped>
.screen,
.screen * {
  box-sizing: border-box;
}
.screen {
  display: flex;
  width: 2452px;
  height: 1946px;
  overflow: hidden;
  background: #282828;
  color: #ebdbb2;
  font: 18.2px/29px 'Open Sans', 'Noto Sans', sans-serif;
}
svg {
  display: block;
  flex: none;
}
.screen span,
b {
  white-space: nowrap;
  flex: none;
}
button {
  font: inherit;
  color: inherit;
  background: none;
  border: 0;
  padding: 0;
  display: flex;
  align-items: center;
}
.window {
  position: relative;
  width: 2446px;
  padding: 18px 0 0 4px;
}
.frame {
  position: absolute;
  left: 0;
  top: 0;
}
.tabs {
  display: flex;
  height: 68px;
}
.tab {
  display: flex;
  align-items: center;
  padding: 0 10px 0 32px;
  border: 2px solid #b8bb26;
  background: #1d2021;
  color: #fff;
  font: 24px/30px 'Liberation Mono', monospace;
  width: 238px;
}
.tab:last-child {
  width: 382px;
}
.tab.on {
  background: #282828;
}
.tab > span:first-child {
  flex: 1;
}
.close {
  display: flex;
  align-items: center;
  justify-content: center;
  width: 28px;
  height: 28px;
  border: 2px solid #808080;
  border-radius: 2px;
  background: #a2a2a2;
  box-shadow: inset 0 0 0 2px #b4b4b4;
  color: #e9e9e9;
}
.on .close {
  border-color: #da3420;
  background: #ea8a5c;
  box-shadow: inset 0 0 0 2px #ee9080;
  color: #fff;
}
.viewport {
  display: flex;
  height: 1860px;
}
.page {
  width: 2425px;
  padding-left: 2px;
}
.navbar {
  display: flex;
  align-items: center;
  height: 80px;
  padding-left: 14px;
  border-bottom: 1px solid #827963;
}
.brand {
  display: flex;
  align-items: center;
  gap: 15px;
  width: 196.500px;
  padding-top: 2px;
  font-size: 23.200px;
  font-weight: 640;
}
.brand svg {
  color: #b8bb26;
}
.links {
  display: flex;
  gap: 9px;
  flex: 1;
}
.link {
  display: flex;
  align-items: center;
  gap: 9.800px;
  height: 48px;
  padding: 1px 9.300px 0;
  border-radius: 7px;
  font-weight: 620;
  font-size: 17.800px;
}
.link.active {
  background: #b8bb26;
  color: #282828;
  font-weight: 500;
}
.updated {
  display: flex;
  gap: 10px;
  align-items: center;
  color: #968a75;
  font-size: 16.200px;
  margin-bottom: 16px;
  padding-right: 34px;
}
.settings {
  display: flex;
  gap: 19px;
  align-items: center;
  padding-right: 29px;
}
.crumbs {
  display: flex;
  align-items: center;
  width: 2395px;
  height: 77px;
  margin: 38px 0 0 14px;
  padding: 0 20px;
  border: 1px solid #827963;
  border-radius: 10px;
  background: #3c3836;
}
.crumbs a,
.crumbs i,
.here {
  padding-top: 1px;
}
.crumbs a {
  color: #b8bb26;
  text-decoration: underline;
  text-underline-offset: 2px;
  text-decoration-thickness: 1px;
}
.crumbs i {
  width: 27px;
  text-align: center;
  font-style: normal;
  color: #968a75;
}
.here {
  color: #a9a9a8;
  margin-right: auto;
}
.btn {
  height: 37px;
  border: 1px solid #827963;
  border-radius: 5px;
  font-size: 16.200px;
}
.btn.accent {
  border-color: #b8bb26;
  color: #b8bb26;
  width: 103px;
  padding-left: 10px;
  gap: 10px;
  margin-right: 15px;
}
.btn.plain {
  width: 94px;
  padding-left: 9px;
  gap: 9px;
}
.row {
  display: flex;
  align-items: flex-start;
  gap: 29px;
  margin-left: 29px;
}
.top {
  margin-top: 39px;
  height: 480px;
}
.card {
  border: 1px solid #827963;
  border-radius: 9px;
  background: #3c3836;
  overflow: hidden;
}
.head {
  display: flex;
  align-items: center;
  height: 45px;
  padding-left: 18.500px;
  gap: 5.500px;
  background: #282828;
  border-bottom: 1px solid #827963;
}
.head.big {
  height: 49px;
}
.h6 {
  font-weight: 620;
  font-size: 17.800px;
  line-height: 26px;
}
.h5 {
  font-weight: 640;
  font-size: 22.800px;
}
.badge {
  display: inline-flex;
  align-items: center;
  height: 25px;
  padding: 0 9.500px;
  border-radius: 7px;
  font-size: 13.600px;
  font-weight: 700;
  color: #282828;
}
.cream {
  background: #ebdbb2;
}
.lime {
  background: #b8bb26;
}
.badge.green {
  background: #198754;
  color: #fff;
}
.badge.cyan {
  background: #0dcaf0;
  color: #fff;
}
.devices {
  display: flex;
  width: 769px;
  height: 480px;
}
.devices .col {
  flex: 1;
}
.devices .head {
  padding-bottom: 2px;
}
.devices .badge {
  margin: 2px 0 0 9px;
}
.bar {
  width: 9px;
  background: #504945;
}
.bar .thumb {
  height: 39px;
  border-radius: 5px;
  background: #928374;
}
.dbody {
  padding: 20px 19px;
}
.search {
  display: flex;
  align-items: center;
  height: 37px;
  padding-left: 9.500px;
  border: 1px solid #827963;
  border-radius: 4px;
  color: #aeabaa;
  font-size: 16.200px;
}
.device {
  display: flex;
  height: 77px;
  margin-top: 18px;
  padding: 17px 0 0 12px;
  border-radius: 5px;
  background: #198754;
}
.mask {
  width: 238px;
  background: #3c3836;
}
.filters {
  width: 1567px;
  height: 329px;
}
.filters .head {
  padding-left: 19px;
  gap: 7px;
}
.grid {
  display: grid;
  grid-template-columns: 496px 368px 239px 367px;
  gap: 19px;
  padding: 19px 19px 0;
}
.grid label {
  display: block;
  height: 38px;
}
.sites {
  display: flex;
  height: 125px;
  border: 1px solid #827963;
  border-radius: 7px;
  overflow: hidden;
}
.sites ul {
  display: flex;
  flex-direction: column;
  justify-content: flex-end;
  flex: 1;
  margin: 0;
  padding: 0 14px;
  list-style: none;
}
.sites li {
  flex: none;
  height: 27px;
  padding-left: 3px;
  line-height: 28px;
}
.sites .sel {
  background: #545454;
  color: #fff;
}
.bar.short {
  padding-top: 10px;
}
.short .thumb {
  height: 65px;
}
.help {
  margin: 4px 0 0;
  height: 25px;
  line-height: 25px;
  font-size: 16.200px;
  color: #968a75;
}
.select {
  display: flex;
  align-items: center;
  justify-content: space-between;
  height: 45px;
  padding: 0 18px 0 15px;
  border: 1px solid #827963;
  border-radius: 7px;
}
.switch {
  display: flex;
  gap: 10.500px;
  line-height: 30px;
}
.track {
  display: flex;
  justify-content: flex-end;
  align-items: center;
  width: 38px;
  height: 19px;
  margin-top: 5px;
  padding-right: 3px;
  border-radius: 10px;
  background: #0d6efd;
}
.knob {
  width: 13.500px;
  height: 13.500px;
  border-radius: 50%;
  background: #fff;
}
.refresh {
  width: 367px;
  height: 37px;
  justify-content: center;
  gap: 5px;
  border-radius: 5px;
  background: #b8bb26;
  color: #282828;
  font-size: 16.200px;
}
.acts {
  display: flex;
  margin-top: 5px;
}
.acts button {
  width: 38px;
  height: 37px;
  justify-content: center;
  border-radius: 5px;
}
.acts .green {
  background: #198754;
  color: #fff;
}
.acts .yellow {
  width: 57px;
  gap: 9px;
  margin: 0 5px 0 4px;
  background: #ffc107;
  color: #000;
}
.acts .cyan {
  background: #0dcaf0;
  color: #000;
}
.active-filters {
  display: flex;
  align-items: center;
  height: 25px;
  margin: 23px 0 0 19px;
  font-size: 16.200px;
}
.active-filters .badge {
  margin-left: 4px;
}
.active-filters .badge + .badge {
  margin-left: 10px;
}
.mut {
  color: #968a75;
}
.viz {
  width: 2365px;
  height: 776px;
  margin: 29px 0 0 29px;
}
.viz .first {
  margin-left: auto;
}
.viz .second {
  margin: 0 19px 0 4.500px;
}
.canvas {
  position: relative;
  height: 725px;
  border: 2px solid #434d57;
  border-radius: 8px;
  background: #1a1a1a;
  overflow: hidden;
}
.graph {
  position: absolute;
  left: 0;
  top: 0;
}
.wire {
  fill: none;
  stroke: #464b4f;
  stroke-width: 0.9;
}
.lbg {
  fill: #484848;
}
.ltx {
  font: 700 3.600px 'Open Sans', sans-serif;
  fill: #b9b9b9;
}
.box {
  fill: #2b3437;
  stroke: #38495a;
}
.ntx {
  font: 700 3.700px 'Open Sans', sans-serif;
  fill: #c2c6c6;
}
.hint {
  position: absolute;
  left: 9px;
  top: 8px;
  display: flex;
  align-items: center;
  gap: 5px;
  width: 259px;
  height: 32px;
  padding: 1px 0 0 9px;
  border-radius: 6px;
  background: #1e1f23;
  color: #968a75;
  font-size: 16.200px;
}
.zoom {
  position: absolute;
  right: 12px;
  top: 12px;
  display: flex;
  gap: 6px;
}
.zoom button {
  width: 38px;
  height: 36px;
  justify-content: center;
  border: 1px solid #f8f9fa;
  border-radius: 5px;
  color: #f8f9fa;
}
.bottom {
  margin-top: 28px;
}
.info {
  width: 1567px;
  height: 260px;
}
.status {
  width: 769px;
  height: 237px;
}
.bottom .head {
  height: 44px;
}
.cols {
  display: flex;
  padding: 17px 0 0 19px;
}
.cols > div {
  flex: none;
  width: 778px;
}
.cols > div + div {
  width: 700px;
}
.sub {
  height: 34px;
  font-size: 17.800px;
  font-weight: 500;
}
.pair {
  display: flex;
  gap: 5.500px;
  height: 29px;
}
.pair.loose {
  height: 48px;
}
.stat {
  padding: 15px 0 0 19px;
}
.stat .pair {
  height: 38.300px;
  align-items: center;
}
.main-bar {
  background: #3c3836;
}
.main-bar .thumb {
  height: 1811px;
  margin-top: 2px;
  background: #827963;
}
.behind {
  display: flex;
  flex-direction: column;
  width: 6px;
  background: linear-gradient(#001022 0 542px, #1a1a1a 542px 1002px, #232323 1002px 1200px, #0a1014 1200px);
}
.behind i {
  width: 6px;
}
.s1,
.s2 {
  height: 12px;
  margin-top: 140px;
  background: #b9b9bb;
}
.s2 {
  margin-top: 112px;
}
.s3,
.s4 {
  height: 3px;
  margin-top: 636px;
  background: #76808a;
}
.s4 {
  margin-top: 680px;
}
</style>
